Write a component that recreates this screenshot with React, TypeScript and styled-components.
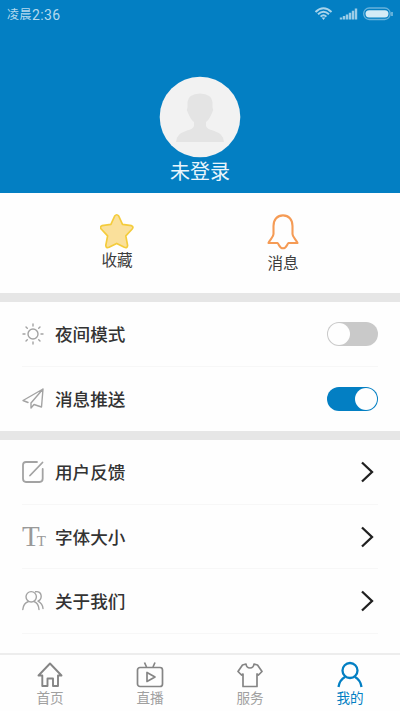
import React, { useState } from 'react';
import styled, { createGlobalStyle } from 'styled-components';

const BLUE = '#037fc3';

const GlobalStyle = createGlobalStyle`
  * { box-sizing: border-box; }
  body {
    margin: 0;
    background: #fefefe;
    font-family: "Noto Sans CJK SC", "Noto Sans", sans-serif;
  }
  button { font: inherit; border: 0; padding: 0; background: none; cursor: pointer; }
`;

const Screen = styled.div`
  display: flex;
  flex-direction: column;
  width: 400px;
  height: 711px;
  overflow: hidden;
  background: #fefefe;
`;

const Header = styled.header`
  display: flex;
  flex-direction: column;
  align-items: center;
  flex: 0 0 193px;
  background: ${BLUE};
`;

const StatusBar = styled.div`
  display: flex;
  align-items: center;
  justify-content: space-between;
  width: 100%;
  height: 28px;
  padding: 0 6px 0 7px;
  color: #b5daee;
`;

const Clock = styled.span`
  display: flex;
  align-items: center;
  font: 14px/28px Roboto, "Noto Sans CJK SC", sans-serif;
  letter-spacing: 0.4px;
  padding-top: 1px;
`;

const Meridiem = styled.span`
  font-size: 12px;
  letter-spacing: 0.5px;
`;

const Avatar = styled.svg`
  width: 82px;
  height: 82px;
  margin-top: 47.5px;
`;

const UserName = styled.div`
  margin-top: -0.5px;
  color: #e9f5fc;
  font-size: 20px;
  line-height: 28px;
`;

const QuickLinks = styled.section`
  display: flex;
  justify-content: space-between;
  flex: 0 0 100px;
  padding: 20px 100px 0;
`;

const QuickLink = styled.button<{ $drop?: number }>`
  display: flex;
  flex-direction: column;
  align-items: center;
  width: 34px;
  color: #3c3c3c;
  white-space: nowrap;

  span {
    margin-top: ${(p) => p.$drop ?? -1}px;
    font-size: 15.6px;
    line-height: 20px;
  }
`;

const Group = styled.section`
  flex: none;
  border-top: 9px solid #e6e6e6;
`;

const Row = styled.div<{ $last?: boolean }>`
  display: flex;
  align-items: center;
  height: 64.5px;
  padding-top: 1px;
  margin: 0 22px;
  border-bottom: 1px solid ${(p) => (p.$last ? 'transparent' : '#f7f7f7')};
`;

const RowIcon = styled.svg`
  width: 22px;
  height: 24px;
  flex: none;
  fill: none;
  stroke: #a3a3a3;
  stroke-width: 1.4;
  stroke-linecap: round;
  stroke-linejoin: round;
`;

const RowLabel = styled.span`
  flex: 1;
  margin-left: 11px;
  color: #333;
  font-size: 17.6px;
  font-weight: 500;
  line-height: 26px;
`;

const LetterIcon = styled.span`
  display: flex;
  align-items: baseline;
  width: 22px;
  padding-top: 3px;
  color: #999;
  font: 29px/24px "Liberation Serif", serif;
  letter-spacing: -3px;

  small { font-size: 15px; }
`;

const Toggle = styled.button<{ $on: boolean }>`
  display: flex;
  align-items: center;
  justify-content: ${(p) => (p.$on ? 'flex-end' : 'flex-start')};
  width: 51px;
  height: 24px;
  padding: 1px;
  border-radius: 12px;
  background: ${(p) => (p.$on ? BLUE : '#c9c9c9')};
`;

const Knob = styled.span`
  width: 22px;
  height: 22px;
  border-radius: 50%;
  background: #fefefe;
`;

const Chevron = styled.svg`
  width: 14px;
  height: 22px;
  margin-right: 4px;
  fill: none;
  stroke: #202020;
  stroke-width: 2.3;
`;

const TabBar = styled.nav`
  display: grid;
  grid-template-columns: repeat(4, 1fr);
  flex: 0 0 58px;
  margin-top: auto;
  border-top: 2px solid #ededed;
`;

const Tab = styled.button<{ $active?: boolean }>`
  display: flex;
  flex-direction: column;
  align-items: center;
  padding-top: 6px;
  color: ${(p) => (p.$active ? BLUE : '#a0a0a0')};
  font-size: 13.6px;
  line-height: 18px;

  svg {
    flex: none;
    width: 28px;
    height: 28px;
    fill: none;
    stroke: ${(p) => (p.$active ? BLUE : '#858585')};
    stroke-width: ${(p) => (p.$active ? 2.3 : 1.7)};
    stroke-linejoin: round;
  }
  span { margin-top: -1px; }
`;

const StatusIcons = () => (
  <svg width="80" height="16" viewBox="0 0 80 16" fill="none">
    <path d="M1.5 6Q9.5-1.5 17.5 6M4 8.3Q9.5 3.2 15 8.3M6.6 10.6Q9.5 7.8 12.4 10.6" stroke="#a9d4eb" strokeWidth="2" />
    <path d="M7.6 11.5h3.8L9.5 14z" fill="#b5daee" />
    <path d="M27 13.5v-2M30 13.5v-3.4M33 13.5V8.5M36 13.5V6.8M39 13.5V4.8M42 13.5V2.5" stroke="#9bcce7" strokeWidth="2.4" />
    <rect x="49.7" y="2" width="26.5" height="11.5" rx="5.5" stroke="#68b3dc" strokeWidth="1.3" />
    <rect x="51.5" y="4.2" width="23" height="7.2" rx="3.6" fill="#d4ebf6" />
    <path d="M78 6v4" stroke="#8dc5e3" strokeWidth="1.4" />
  </svg>
);

const Arrow = () => (
  <Chevron viewBox="0 0 14 22">
    <path d="M2 1.5 12 11 2 20.5" />
  </Chevron>
);

export default function App() {
  const [night, setNight] = useState(false);
  const [push, setPush] = useState(true);

  return (
    <>
      <GlobalStyle />
      <Screen>
        <Header>
          <StatusBar>
            <Clock><Meridiem>凌晨</Meridiem>2:36</Clock>
            <StatusIcons />
          </StatusBar>
          <Avatar viewBox="0 0 82 82">
            <circle cx="41" cy="41" r="40.3" fill="#f2f2f2" />
            <path d="M28.5 26Q29 18 41 17.5Q53 18 53.5 26V31Q55 34 53 37Q50 44 47 46V50Q48 53 54 54.5Q65 58 65 66H17Q17 58 28 54.5Q34 53 35 50V46Q32 44 29 37Q27 34 28.5 31Z" fill="#e4e4e4" />
          </Avatar>
          <UserName>未登录</UserName>
        </Header>

        <QuickLinks>
          <QuickLink>
            <svg width="34" height="37" viewBox="0 0 34 37">
              <path d="M14.7 3Q16.7.5 18.7 3L22.5 11.4 31.5 12.7Q34 13.8 32.2 16L25.8 22.8 27.6 32.4Q27.3 35.5 24.4 34.3L16.7 30.4 9 34.3Q6 35.5 5.8 32.4L7.6 22.8 1.2 16Q-.5 13.8 1.9 12.7L10.9 11.4Z" fill="#fae09b" stroke="#f4cc3c" strokeWidth="1.7" strokeLinejoin="round" />
            </svg>
            <span>收藏</span>
          </QuickLink>
          <QuickLink $drop={1.5}>
            <svg width="34" height="37" viewBox="0 0 34 37">
              <path d="M7.5 21V13C7.5 6.5 11.3 2.4 17 2.4S26.5 6.5 26.5 13V21C26.5 24 29.5 26 31.5 30H22.5C21 31 20.5 35.3 17 35.3S13 31 11.5 30H2.5C4.5 26 7.5 24 7.5 21Z" fill="none" stroke="#f59b55" strokeWidth="2.1" strokeLinejoin="round" />
            </svg>
            <span>消息</span>
          </QuickLink>
        </QuickLinks>

        <Group>
          <Row>
            <RowIcon viewBox="0 0 22 24">
              <circle cx="11" cy="12" r="5" />
              <path d="M11 2v2M11 20v2M1 12h2M19 12h2M4 5l1.3 1.3M16.7 17.7 18 19M4 19l1.3-1.3M16.7 6.3 18 5" />
            </RowIcon>
            <RowLabel>夜间模式</RowLabel>
            <Toggle $on={night} role="switch" aria-checked={night} onClick={() => setNight(!night)}><Knob /></Toggle>
          </Row>
          <Row $last>
            <RowIcon viewBox="0 0 22 24">
              <path d="M1 13.5 21 2 19.5 20 12 17.5 9 21V16L21 2M1 13.5 6 15.5" />
            </RowIcon>
            <RowLabel>消息推送</RowLabel>
            <Toggle $on={push} role="switch" aria-checked={push} onClick={() => setPush(!push)}><Knob /></Toggle>
          </Row>
        </Group>

        <Group>
          <Row>
            <RowIcon viewBox="0 0 22 24">
              <path d="M15 2H4Q1 2 1 5V18.5Q1 22 4 22H17.5Q20.7 22 20.7 18.5V9M8 15.5 20.5 2.5" strokeWidth="1.8" />
            </RowIcon>
            <RowLabel>用户反馈</RowLabel>
            <Arrow />
          </Row>
          <Row>
            <LetterIcon>T<small>T</small></LetterIcon>
            <RowLabel>字体大小</RowLabel>
            <Arrow />
          </Row>
          <Row>
            <RowIcon viewBox="0 0 22 24">
              <circle cx="9.2" cy="7.8" r="5.2" />
              <path d="M.8 20.5Q1.5 14 6.5 12.5M12 12.5Q16.5 14 17 20.5M13.5 2.8C20 1.5 21 10 16 12.2Q20.5 14.5 21 19.5" />
            </RowIcon>
            <RowLabel>关于我们</RowLabel>
            <Arrow />
          </Row>
        </Group>

        <TabBar>
          <Tab>
            <svg viewBox="0 0 28 28">
              <path d="M2.5 14.5 14 2.5 25.5 14.5H22V25H17V17.5H11.5V25H6.3V14.5Z" strokeWidth="1.9" />
            </svg>
            <span>首页</span>
          </Tab>
          <Tab>
            <svg viewBox="0 0 28 28">
              <rect x="1.5" y="6.5" width="25" height="19" rx="2.5" />
              <path d="M8.5 1.5 10.5 6M19 1.5 17 6M11 11.5V20.5L19 16Z" />
            </svg>
            <span>直播</span>
          </Tab>
          <Tab>
            <svg viewBox="0 0 28 28">
              <path d="M10 3Q10.5 7 14 7T18 3L21.5 4 26 10.5 22.5 14 21 13V25.5H7V13L5.5 14 2 10.5 6.5 4Z" />
            </svg>
            <span>服务</span>
          </Tab>
          <Tab $active>
            <svg viewBox="0 0 28 28">
              <circle cx="14" cy="9.5" r="7.5" />
              <path d="M2.5 26Q3.5 19 9.3 15.8M18.7 15.8Q24.5 19 25.5 26" />
            </svg>
            <span>我的</span>
          </Tab>
        </TabBar>
      </Screen>
    </>
  );
}
